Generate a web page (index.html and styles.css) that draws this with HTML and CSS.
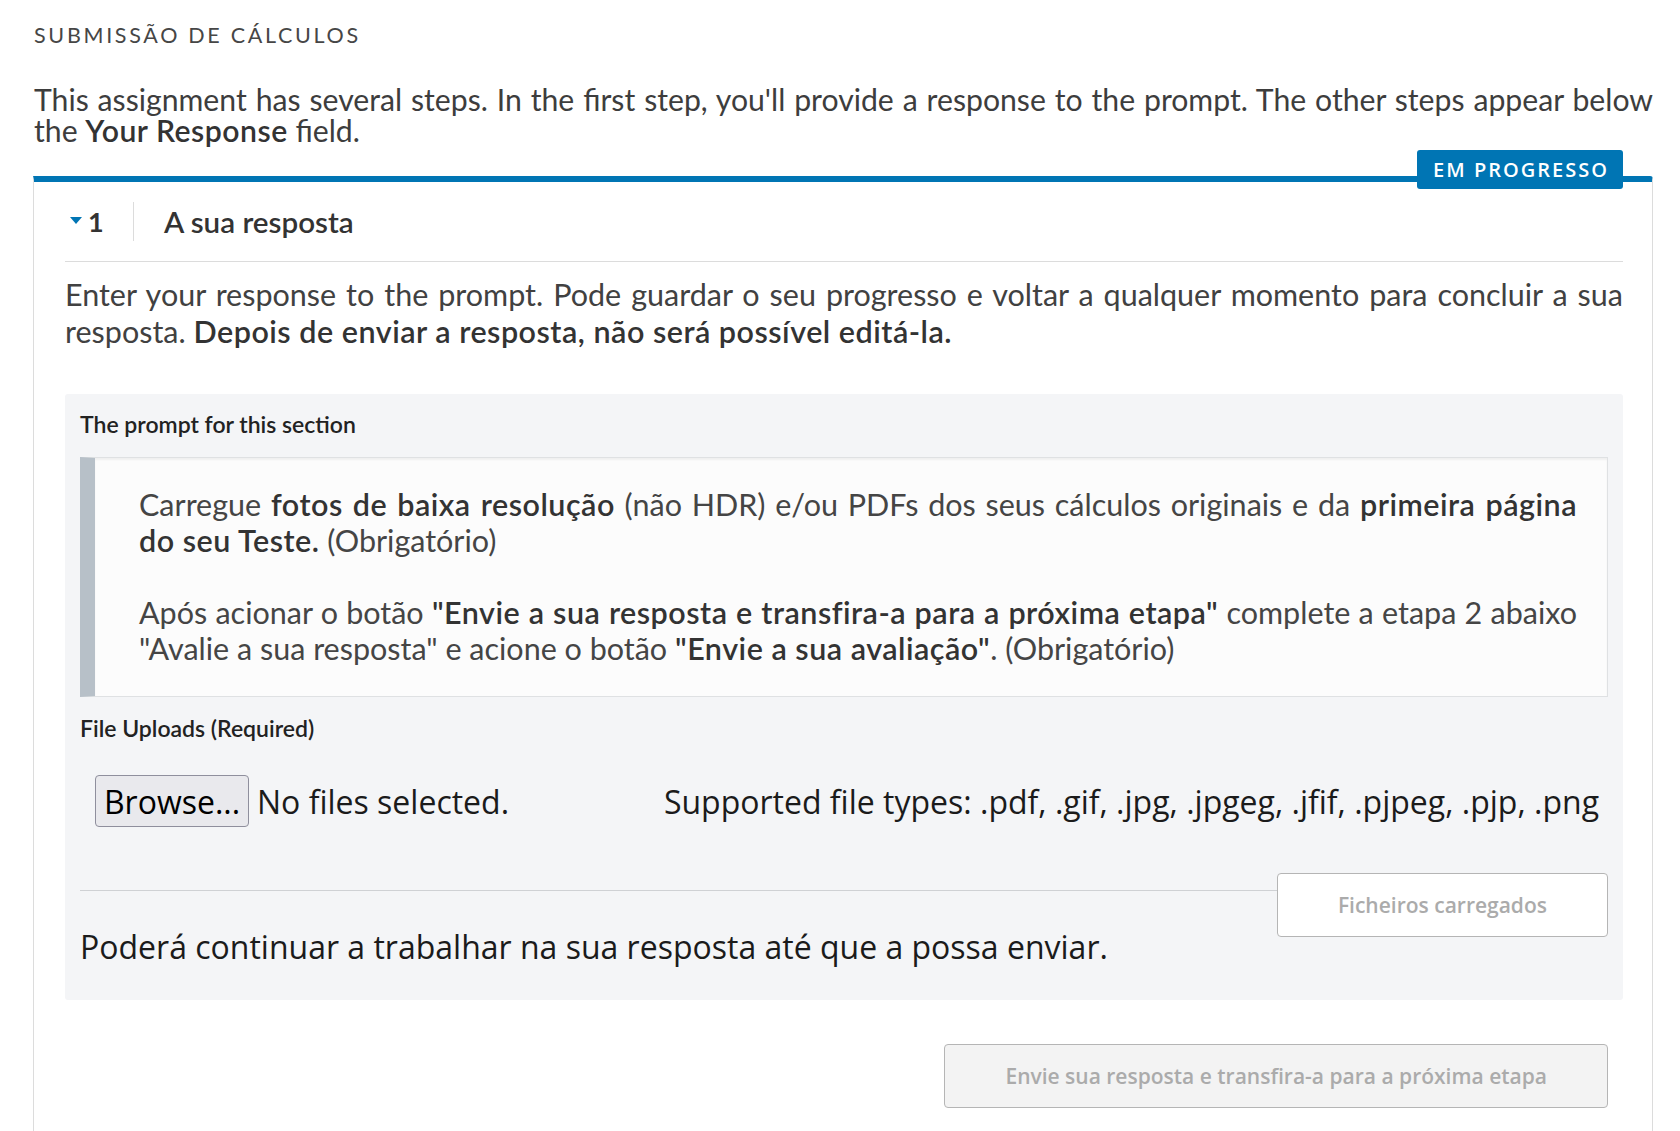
FILE: index.html
```html
<!DOCTYPE html>
<html lang="pt">
<head>
<meta charset="utf-8">
<title>Submissão de cálculos</title>
<link rel="stylesheet" href="styles.css">
</head>
<body>
<main class="page">
  <h2 class="section-title">SUBMISSÃO DE CÁLCULOS</h2>
  <p class="intro">This assignment has several steps. In the first step, you'll provide a response to the prompt. The other steps appear below the <strong>Your Response</strong> field.</p>

  <section class="step">
    <span class="badge">EM PROGRESSO</span>
    <header class="step-header">
      <span class="step-num"><span class="caret"></span>1</span>
      <h3 class="step-title">A sua resposta</h3>
    </header>

    <p class="instructions">Enter your response to the prompt. Pode guardar o seu progresso e voltar a qualquer momento para concluir a sua resposta. <strong>Depois de enviar a resposta, não será possível editá-la.</strong></p>

    <div class="panel">
      <h4 class="panel-label">The prompt for this section</h4>
      <blockquote class="prompt">
        <p>Carregue <strong>fotos de baixa resolução</strong> (não HDR) e/ou PDFs dos seus cálculos originais e da <strong>primeira página do seu Teste.</strong> (Obrigatório)</p>
        <p>Após acionar o botão <strong>"Envie a sua resposta e transfira-a para a próxima etapa"</strong> complete a etapa 2 abaixo "Avalie a sua resposta" e acione o botão <strong>"Envie a sua avaliação"</strong>. (Obrigatório)</p>
      </blockquote>

      <h4 class="panel-label upload-label">File Uploads (Required)</h4>
      <div class="file-row">
        <div class="file-input">
          <span class="browse">Browse...</span>
          <span class="file-status">No files selected.</span>
        </div>
        <span class="file-types">Supported file types: .pdf, .gif, .jpg, .jpgeg, .jfif, .pjpeg, .pjp, .png</span>
      </div>

      <button class="btn btn-upload" type="button" disabled>Ficheiros carregados</button>
      <hr class="divider">
      <p class="note">Poderá continuar a trabalhar na sua resposta até que a possa enviar.</p>
    </div>

    <div class="actions">
      <button class="btn btn-submit" type="button" disabled>Envie sua resposta e transfira-a para a próxima etapa</button>
    </div>
  </section>
</main>
</body>
</html>
```

FILE: styles.css
```css
* {
  box-sizing: border-box;
}

html,
body {
  margin: 0;
  padding: 0;
  background: #ffffff;
}

body {
  font-family: Lato, "Open Sans", "Liberation Sans", sans-serif;
  color: #414141;
  overflow: hidden;
}

.page {
  padding: 0 27px 0 33px;
}

.section-title {
  margin: 0;
  padding: 22px 0 0 1px;
  font-size: 21.5px;
  line-height: 26px;
  font-weight: 400;
  letter-spacing: 2.7px;
  color: #464646;
}

.intro {
  margin: 36px 0 0 1px;
  font-size: 30.2px;
  line-height: 31px;
  text-align: justify;
  color: #3d3d3d;
}

.intro strong {
  font-weight: 600;
  color: #333;
  letter-spacing: 0.5px;
}

.step {
  position: relative;
  margin-top: 30px;
  border-top: 6px solid #0075b4;
  border-left: 1px solid #dcdcdc;
  border-right: 1px solid #dcdcdc;
  border-top-right-radius: 3px;
  padding: 0 29px 60px 31px;
}

.badge {
  position: absolute;
  top: -32px;
  right: 29px;
  height: 39px;
  width: 206px;
  display: flex;
  align-items: center;
  justify-content: center;
  padding-left: 2px;
  background: #0075b4;
  border-radius: 3px;
  color: #fff;
  font-family: "Open Sans", sans-serif;
  font-weight: 600;
  font-size: 20px;
  letter-spacing: 2px;
}

.step-header {
  display: flex;
  align-items: center;
  padding: 20px 0 20px;
  border-bottom: 1px solid #dcdcdc;
}

.step-num {
  display: flex;
  align-items: center;
  gap: 6px;
  width: 69px;
  height: 39px;
  padding-left: 5px;
  border-right: 1px solid #dcdcdc;
  font-size: 27px;
  font-weight: 700;
  color: #333;
}

.caret {
  width: 0;
  height: 0;
  border-left: 6.5px solid transparent;
  border-right: 6.5px solid transparent;
  border-top: 7px solid #0075b4;
  margin-top: -2px;
}

.step-title {
  margin: 0;
  padding-left: 30px;
  font-size: 29.6px;
  font-weight: 600;
  color: #333;
}

.instructions {
  margin: 14px 0 0;
  font-size: 30.5px;
  line-height: 37px;
  text-align: justify;
  color: #414141;
}

.instructions strong {
  font-weight: 600;
  color: #333;
  letter-spacing: 0.5px;
}

.panel {
  display: flow-root;
  margin-top: 44px;
  padding: 18px 15px 33px;
  background: #f4f5f7;
  border-radius: 3px;
}

.panel-label {
  margin: 0;
  font-size: 23px;
  line-height: 25px;
  font-weight: 600;
  color: #222;
}

.prompt {
  margin: 20px 0 0;
  padding: 28px 30px 30px 44px;
  background: #fcfcfc;
  border: 1px solid #dfe1e3;
  border-left: 15px solid #b7c0c8;
  box-shadow: inset 0 2px 2px rgba(0, 0, 0, 0.05);
}

.prompt p {
  margin: 0;
  font-size: 30.5px;
  line-height: 36px;
  text-align: justify;
  color: #454545;
}

.prompt p + p {
  margin-top: 36px;
}

.prompt strong {
  font-weight: 600;
  color: #333;
  letter-spacing: 0.5px;
}

.upload-label {
  margin-top: 19px;
}

.file-row {
  display: flex;
  align-items: center;
  margin-top: 34px;
  padding: 0 9px 0 15px;
  font-family: "Open Sans", sans-serif;
  font-size: 32px;
  color: #1b1b1b;
}

.file-input {
  display: flex;
  align-items: center;
  gap: 8px;
}

.browse {
  display: inline-flex;
  align-items: center;
  justify-content: center;
  width: 154px;
  height: 52px;
  background: #e9e9ed;
  border: 1px solid #8f8f9d;
  border-radius: 4px;
  color: #000;
}

.file-types {
  margin-left: auto;
}

.btn {
  height: 64px;
  padding: 0 60px;
  border: 1px solid #b5b5b5;
  border-radius: 4px;
  font-family: "Open Sans", sans-serif;
  font-size: 21px;
  font-weight: 600;
  color: #ababab;
}

.btn-upload {
  float: right;
  margin-top: 46px;
  background: #ffffff;
}

.divider {
  margin: 63px 0 0;
  border: 0;
  border-top: 1px solid #cfd1d4;
  height: 0;
}

.note {
  margin: 36px 0 0;
  font-family: "Open Sans", sans-serif;
  font-size: 32px;
  line-height: 40px;
  color: #1b1b1b;
}

.actions {
  display: flex;
  justify-content: flex-end;
  margin-top: 44px;
  padding-right: 15px;
}

.btn-submit {
  background: #f3f3f3;
}
```
